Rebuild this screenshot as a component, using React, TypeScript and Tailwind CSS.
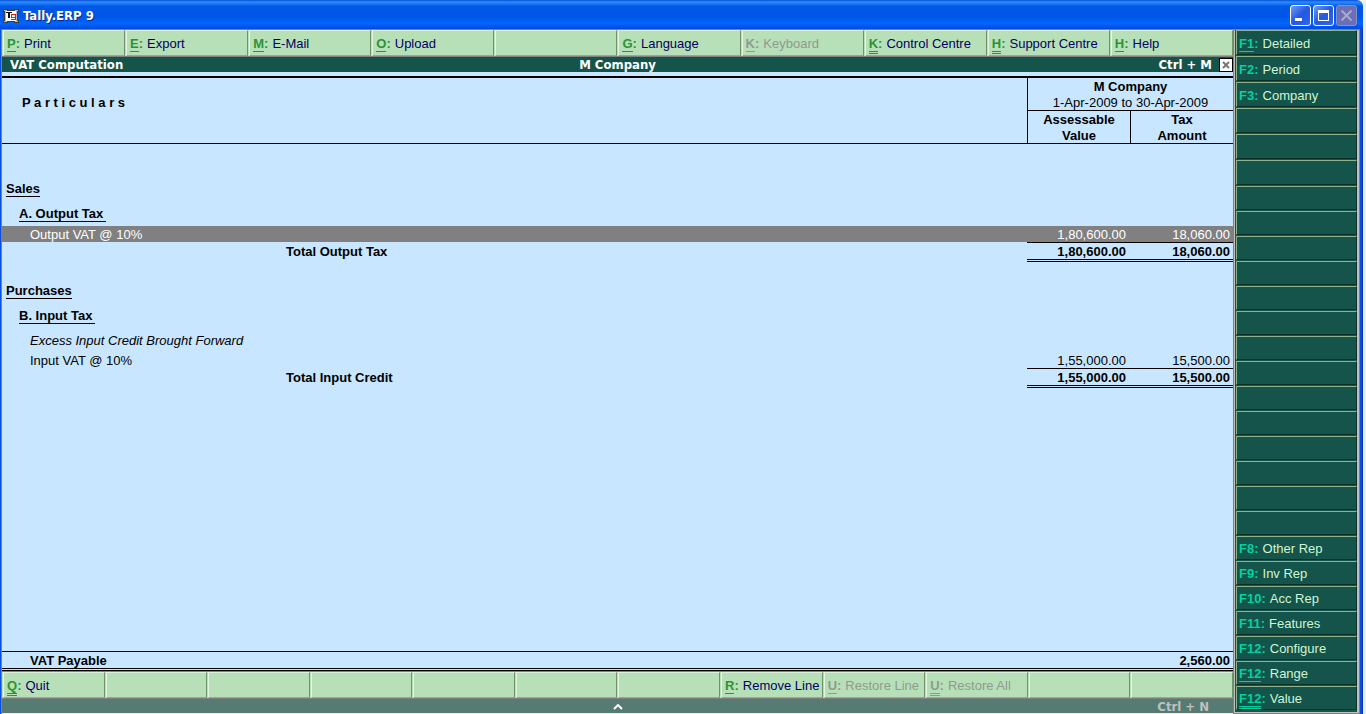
import React from "react";

type Key = { k?: string; label?: string; lines?: 0 | 1 | 2; off?: boolean };

const topKeys: Key[] = [
  { k: "P", label: "Print", lines: 1 },
  { k: "E", label: "Export", lines: 1 },
  { k: "M", label: "E-Mail", lines: 1 },
  { k: "O", label: "Upload", lines: 1 },
  {},
  { k: "G", label: "Language", lines: 1 },
  { k: "K", label: "Keyboard", lines: 1, off: true },
  { k: "K", label: "Control Centre", lines: 2 },
  { k: "H", label: "Support Centre", lines: 2 },
  { k: "H", label: "Help", lines: 1 },
];

const bottomKeys: Key[] = [
  { k: "Q", label: "Quit", lines: 2 },
  {}, {}, {}, {}, {}, {},
  { k: "R", label: "Remove Line", lines: 1 },
  { k: "U", label: "Restore Line", lines: 1, off: true },
  { k: "U", label: "Restore All", lines: 2, off: true },
  {}, {},
];

const sideKeys: Key[] = [
  { k: "F1", label: "Detailed", lines: 1 },
  { k: "F2", label: "Period" },
  { k: "F3", label: "Company" },
  {}, {}, {}, {}, {}, {}, {}, {}, {}, {}, {}, {}, {}, {}, {}, {}, {},
  { k: "F8", label: "Other Rep" },
  { k: "F9", label: "Inv Rep" },
  { k: "F10", label: "Acc Rep" },
  { k: "F11", label: "Features" },
  { k: "F12", label: "Configure" },
  { k: "F12", label: "Range", lines: 1 },
  { k: "F12", label: "Value", lines: 2 },
];

const underline = {
  0: "",
  1: "border-b border-current",
  2: "border-b-3 border-double border-current",
};

function Caption({ item, side }: { item: Key; side?: boolean }) {
  if (!item.k) return null;
  const keyColor = item.off ? "text-[#8f9a8f]" : side ? "text-[#00d2a0]" : "text-[#2b9436]";
  const labelColor = item.off ? "text-[#8f9a8f]" : side ? "text-[#d2f5d2]" : "text-[#000064]";
  return (
    <span className="flex items-start leading-[14px] whitespace-nowrap">
      <span className={`flex items-start font-bold ${keyColor}`}>
        <span className={underline[item.lines ?? 0]}>{item.k}</span>:
      </span>
      <span className={`ml-1 ${labelColor}`}>{item.label}</span>
    </span>
  );
}

function GreenBar({ items, name }: { items: Key[]; name: string }) {
  return (
    <nav aria-label={name} className="flex h-[26px] shrink-0 gap-px bg-[#b8e0b8] pl-px">
      {items.map((item, i) => (
        <button
          key={i}
          type="button"
          disabled={item.off || !item.k}
          aria-label={item.label ?? "Unassigned"}
          className="flex min-w-0 flex-1 basis-0 items-start border-t border-r border-b border-l border-t-[#dcf2dc] border-r-[#6f9468] border-b-[#8fae88] border-l-[#e4f7e4] bg-[#b8e0b8] pt-[6px] pl-[3px]"
        >
          <Caption item={item} />
        </button>
      ))}
    </nav>
  );
}

function Amounts({ a, b, total }: { a: string; b: string; total?: boolean }) {
  const rule = total ? "border-t border-t-black border-b-3 [border-bottom-style:double] border-b-black font-bold" : "";
  return (
    <>
      <td className={`pt-[2px] pr-1 text-right ${rule}`}>{a}</td>
      <td className={`pt-[2px] pr-[3px] text-right ${rule}`}>{b}</td>
    </>
  );
}

function SectionRow({ children, tall }: { children: string; tall: string }) {
  return (
    <tr className={`${tall} align-bottom`}>
      <th colSpan={3} scope="colgroup" className="pl-1 text-left">
        <span className="block w-fit border-b border-black">{children}</span>
      </th>
    </tr>
  );
}

function GroupRow({ children }: { children: string }) {
  return (
    <tr className="h-[25px] align-bottom">
      <th colSpan={3} scope="colgroup" className="pl-[17px] text-left">
        <span className="block w-fit border-b border-black pr-[3px]">{children}</span>
      </th>
    </tr>
  );
}

export default function App() {
  return (
    <div className="flex h-screen min-h-[714px] w-full flex-col border-r-3 border-[#e8f0f0] font-['Liberation_Sans',Arial,sans-serif] text-[13px] leading-4 text-black">
      <header className="flex h-[29px] shrink-0 items-center rounded-tr-md bg-[linear-gradient(#0a4fd8,#2a8cff_7%,#0058e6_22%,#0055e5_55%,#0066ff_82%,#0048d8_100%)] pt-[2px] pr-[6px] pl-[3px]">
        <svg viewBox="0 0 16 16" className="h-4 w-4" shapeRendering="crispEdges" aria-hidden="true">
          <path d="M0 1h5v1h6V1h5v3h-1v8h1v3h-5v-1H5v1H0v-3h1V4H0z" fill="#3c3c3c" />
          <path d="M1 2h3v1h8V2h3v1h-1v10h1v1h-3v-1H4v1H1v-1h1V3H1z" fill="#b8b8b8" />
          <path d="M3 3h10v10H3z" fill="#fff" />
          <path d="M3 4h6v1H7v5H5V5H3z" fill="#111" />
          <path d="M8 6h5v6H8v-1h4v-1H8zM9 7v2h3V7z" fill="#e01818" fillRule="evenodd" />
        </svg>
        <h1 className="ml-1 flex-1 font-['DejaVu_Sans_Condensed','DejaVu_Sans',sans-serif] text-[13px] font-bold text-white [text-shadow:1px_1px_0_#0a2a8a]">Tally.ERP 9</h1>
        <div className="flex gap-[2px]">
          <button type="button" aria-label="Minimize" className="flex h-[21px] w-[21px] items-end rounded-[3px] border border-white bg-[linear-gradient(135deg,#6f9cf5,#2458e0_50%,#2d66f0)] pb-1 pl-1">
            <span className="h-[3px] w-[7px] bg-white" />
          </button>
          <button type="button" aria-label="Maximize" className="flex h-[21px] w-[21px] items-center justify-center rounded-[3px] border border-white bg-[linear-gradient(135deg,#6f9cf5,#2458e0_50%,#2d66f0)]">
            <span className="h-[11px] w-[11px] border border-t-3 border-white" />
          </button>
          <button type="button" aria-label="Close" disabled className="flex h-[21px] w-[21px] items-center justify-center rounded-[3px] border border-[#8290d0] bg-[#6b6fb6]">
            <svg viewBox="0 0 11 11" className="h-[11px] w-[11px]" aria-hidden="true">
              <path d="M0.500 0.500l10 10M10.500 0.500l-10 10" stroke="#a9a9d2" strokeWidth="2" />
            </svg>
          </button>
        </div>
      </header>

      <div className="flex min-h-0 flex-1 border-r border-l border-l-[#0a4fe0] border-r-[#0030c0] bg-[#0a4fe0] pr-[2px]">
        <div className="flex min-w-0 flex-1 flex-col border-t border-l border-[#808080]">
          <GreenBar items={topKeys} name="Commands" />
          <div className="grid h-4 shrink-0 grid-cols-[1fr_auto_1fr] items-center border-t border-[#808080] bg-[#14544a] font-['DejaVu_Sans_Condensed','DejaVu_Sans',sans-serif] font-bold text-white">
            <h2 className="pl-2">VAT Computation</h2>
            <p>M Company</p>
            <div className="flex items-center justify-end">
              <span>Ctrl + M</span>
              <button type="button" aria-label="Close report" className="ml-[7px] flex h-[14px] w-[14px] items-center justify-center border border-black bg-white">
                <svg viewBox="0 0 8 8" className="h-2 w-2" aria-hidden="true">
                  <path d="M1 1l6 6M7 1L1 7" stroke="#777" strokeWidth="2" />
                </svg>
              </button>
            </div>
          </div>

          <main className="flex min-h-0 flex-1 flex-col bg-[#c8e6ff] pt-1 leading-[14px]">
            <table className="w-full table-fixed border-separate border-spacing-0">
              <colgroup>
                <col />
                <col className="w-[103px]" />
                <col className="w-[103px]" />
              </colgroup>
              <thead className="leading-4">
                <tr className="h-[35px]">
                  <th rowSpan={2} scope="col" className="border-t-2 border-b border-black pb-4 pl-5 text-left">P a r t i c u l a r s</th>
                  <th colSpan={2} scope="colgroup" className="border-t-2 border-b border-l border-black font-normal">
                    <span className="block pt-px font-bold">M Company</span>
                    <span className="-mb-px block">1-Apr-2009 to 30-Apr-2009</span>
                  </th>
                </tr>
                <tr className="h-[33px]">
                  <th scope="col" className="border-b border-l border-black">
                    <span className="-mb-px block pt-px">Assessable<br />Value</span>
                  </th>
                  <th scope="col" className="border-b border-l border-black">
                    <span className="-mb-px block pt-px">Tax<br />Amount</span>
                  </th>
                </tr>
              </thead>
              <tbody>
                <SectionRow tall="h-[53px]">Sales</SectionRow>
                <GroupRow>A. Output Tax</GroupRow>
                <tr className="h-1"><td colSpan={3} /></tr>
                <tr className="bg-[#808080] text-white">
                  <td className="pt-[2px] pl-7">Output VAT @ 10%</td>
                  <Amounts a="1,80,600.00" b="18,060.00" />
                </tr>
                <tr className="align-top">
                  <th scope="row" className="pt-[3px] pl-[284px] text-left">Total Output Tax</th>
                  <Amounts a="1,80,600.00" b="18,060.00" total />
                </tr>
                <SectionRow tall="h-[37px]">Purchases</SectionRow>
                <GroupRow>B. Input Tax</GroupRow>
                <tr className="h-6 align-bottom">
                  <td className="pl-7 italic">Excess Input Credit Brought Forward</td>
                  <td />
                  <td />
                </tr>
                <tr className="h-5 align-bottom">
                  <td className="pl-7">Input VAT @ 10%</td>
                  <Amounts a="1,55,000.00" b="15,500.00" />
                </tr>
                <tr className="align-top">
                  <th scope="row" className="pt-[3px] pl-[284px] text-left">Total Input Credit</th>
                  <Amounts a="1,55,000.00" b="15,500.00" total />
                </tr>
              </tbody>
            </table>
            <div className="mt-auto flex justify-between border-t border-b-3 border-black pt-[2px] pr-[3px] pl-7 font-bold [border-bottom-style:double]">
              <span>VAT Payable</span>
              <span>2,560.00</span>
            </div>
          </main>

          <div className="shrink-0 border-y border-[#808080]">
            <GreenBar items={bottomKeys} name="Line actions" />
          </div>
          <footer className="grid h-[15px] shrink-0 grid-cols-[1fr_auto_1fr] items-center border-b border-[#e8f0f0] bg-[#567b72] font-['DejaVu_Sans_Condensed','DejaVu_Sans',sans-serif] font-bold text-[#c0c0c0]">
            <span />
            <svg viewBox="0 0 10 6" className="h-[6px] w-[10px]" aria-hidden="true">
              <path d="M1 5l4-4 4 4" fill="none" stroke="#fff" strokeWidth="2" />
            </svg>
            <span className="pr-6 text-right">Ctrl + N</span>
          </footer>
        </div>

        <aside className="flex w-[127px] shrink-0 border-t border-r border-b border-l border-[#808080]">
          <div className="flex flex-1 flex-col border-r-2 border-b border-l border-[#c0c0c0] bg-[#14544a] pl-px">
            {sideKeys.map((item, i) => (
              <button
                key={i}
                type="button"
                disabled={!item.k}
                aria-label={item.label ?? "Unassigned"}
                className={`${i < 6 ? "h-[25px] pt-[6px]" : "h-6 pt-[5px]"} mb-px flex shrink-0 items-start border border-t-[#8cb48c] border-r-[#0c3029] border-b-[#0c3029] border-l-[#8cb48c] bg-[#14544a] pl-[2px]`}
              >
                <Caption item={item} side />
              </button>
            ))}
          </div>
        </aside>
      </div>
    </div>
  );
}
